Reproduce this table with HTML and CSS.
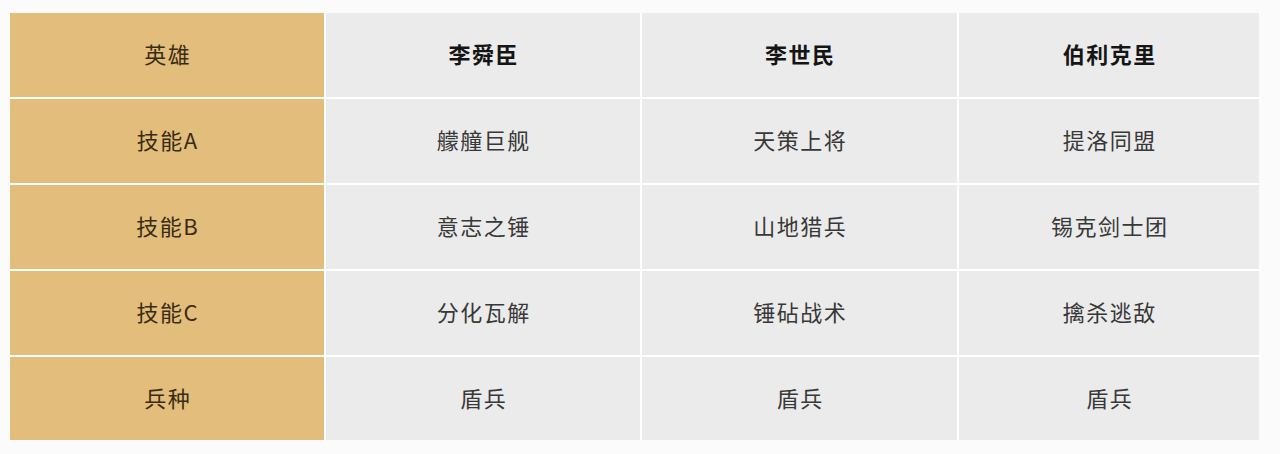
FILE: index.html
```html
<!DOCTYPE html>
<html lang="zh">
<head>
<meta charset="utf-8">
<link rel="stylesheet" href="styles.css">
</head>
<body>
<div class="table">
  <div class="cell label">英雄</div>
  <div class="cell head">李舜臣</div>
  <div class="cell head">李世民</div>
  <div class="cell head">伯利克里</div>

  <div class="cell label">技能A</div>
  <div class="cell">艨艟巨舰</div>
  <div class="cell">天策上将</div>
  <div class="cell">提洛同盟</div>

  <div class="cell label">技能B</div>
  <div class="cell">意志之锤</div>
  <div class="cell">山地猎兵</div>
  <div class="cell">锡克剑士团</div>

  <div class="cell label">技能C</div>
  <div class="cell">分化瓦解</div>
  <div class="cell">锤砧战术</div>
  <div class="cell">擒杀逃敌</div>

  <div class="cell label">兵种</div>
  <div class="cell">盾兵</div>
  <div class="cell">盾兵</div>
  <div class="cell">盾兵</div>
</div>
</body>
</html>
```

FILE: styles.css
```css
html, body {
  margin: 0;
  padding: 0;
  background: #fbfbfb;
}
body {
  padding: 13px 0 0 10px;
  font-family: "Noto Sans CJK SC", "Noto Sans", sans-serif;
}
.table {
  display: grid;
  grid-template-columns: 314px 314px 315px 300px;
  grid-template-rows: 84px 84px 84px 84px 83px;
  gap: 2px;
  width: 1249px;
  background: #ffffff;
}
.cell {
  display: flex;
  align-items: center;
  justify-content: center;
  background: #ebebeb;
  color: #383838;
  font-size: 22px;
  line-height: 1;
  letter-spacing: 1.5px;
  padding-left: 1.5px;
  padding-bottom: 4px;
}
.label {
  background: #e2bd7b;
  color: #3a2c14;
}
.head {
  font-weight: 700;
  color: #151515;
}
```
